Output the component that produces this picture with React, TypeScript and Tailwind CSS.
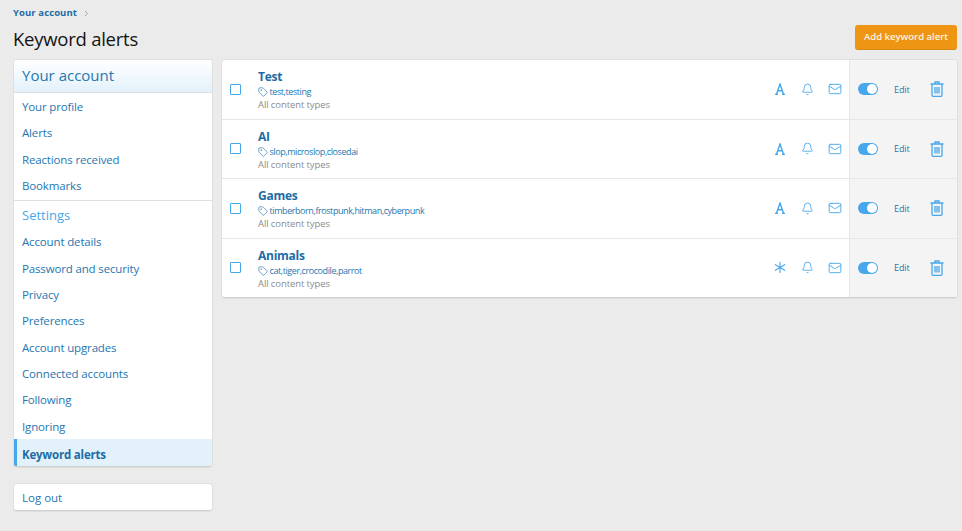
import React from 'react';
import { Tag, Bell, Mail, ChevronRight } from 'lucide-react';

const font = "font-['Open_Sans','Noto_Sans',sans-serif]";

const accountLinks = ['Your profile', 'Alerts', 'Reactions received', 'Bookmarks'];
const settingsLinks = [
  'Account details',
  'Password and security',
  'Privacy',
  'Preferences',
  'Account upgrades',
  'Connected accounts',
  'Following',
  'Ignoring',
];

const alerts = [
  { title: 'Test', tags: 'test,testing', star: false },
  { title: 'AI', tags: 'slop,microslop,closedai', star: false },
  { title: 'Games', tags: 'timberborn,frostpunk,hitman,cyberpunk', star: false },
  { title: 'Animals', tags: 'cat,tiger,crocodile,parrot', star: true },
];

function NavLink({ label }: { label: string }) {
  return (
    <a className="flex h-[26.4px] items-center pl-2 text-[11.5px] tracking-[-0.15px] text-[#2577b1]">{label}</a>
  );
}

function LetterIcon() {
  return (
    <svg width="12" height="12" viewBox="0 0 12 12" fill="none" stroke="#47a7eb" strokeWidth="1.4">
      <path d="M1 11.5h3M8 11.5h3M2.4 11.5 6 1l3.6 10.5M3.6 7.8h4.8" />
    </svg>
  );
}

function StarIcon() {
  return (
    <svg width="13" height="13" viewBox="0 0 13 13" fill="none" stroke="#47a7eb" strokeWidth="1.2">
      <path d="M6.5 0.5v12M1 3.2l11 6.6M12 3.2 1 9.8" />
    </svg>
  );
}

function TrashIcon() {
  return (
    <svg width="14" height="16" viewBox="0 0 14 16" fill="none" stroke="#47a7eb" strokeWidth="1.3">
      <path d="M0.5 3h13M5 3V1h4v2M2 3v11.2c0 .6.4 1.1 1 1.1h8c.6 0 1-.5 1-1.1V3M5 6v6.5M7 6v6.5M9 6v6.5" />
    </svg>
  );
}

function AlertRow({ title, tags, star, last }: { title: string; tags: string; star: boolean; last: boolean }) {
  return (
    <div className={`flex items-stretch ${last ? 'h-[58px]' : 'h-[59.5px] border-b border-[#e7e7e7]'}`}>
      <div className="flex w-[19px] items-center justify-end">
        <span className="h-[11px] w-[11px] rounded-[1px] border-[1.5px] border-[#47a7eb]" />
      </div>
      <div className="flex flex-1 flex-col pl-[17px] pt-[9px]">
        <div className="text-[12px] leading-[15px] font-bold tracking-[-0.25px] text-[#1d6ca5]">{title}</div>
        <div className="mt-[1px] flex h-[14px] items-center gap-[1.5px] text-[9px] tracking-[-0.42px] text-[#2577b1]">
          <Tag size={10} color="#2577b1" strokeWidth={1.6} />
          {tags}
        </div>
        <div className="-mt-[1px] text-[9.5px] leading-[13px] tracking-[-0.1px] text-[#8c8c8c]">All content types</div>
      </div>
      <div className="flex items-center">
        <span className="flex w-[12px] justify-center">{star ? <StarIcon /> : <LetterIcon />}</span>
        <span className="ml-[15px]">
          <Bell size={13} color="#47a7eb" strokeWidth={1.6} />
        </span>
        <span className="ml-[14px] mr-[7px]">
          <Mail size={14} color="#47a7eb" strokeWidth={1.6} />
        </span>
      </div>
      <div className="flex w-[108px] items-center border-l border-[#e7e7e7] bg-[#f4f4f4] pl-[8px]">
        <span className="flex h-[12px] w-[20px] items-center justify-end rounded-full bg-[#47a7eb] pr-[1px]">
          <span className="h-[10px] w-[10px] rounded-full bg-white" />
        </span>
        <span className="ml-[16px] text-[9px] tracking-[-0.1px] text-[#2577b1]">Edit</span>
        <span className="ml-[20px]">
          <TrashIcon />
        </span>
      </div>
    </div>
  );
}

export default function App() {
  return (
    <div className={`${font} h-[531px] w-[962px] overflow-hidden bg-[#ebebeb] px-[14px] pt-[7px] pr-[5px]`}>
      <div className="-ml-[1px] flex h-[12px] items-center text-[9.5px] font-bold tracking-[0.1px] text-[#1d6ca5]">
        Your account
        <ChevronRight size={9} color="#8c8c8c" className="ml-[5px]" />
      </div>
      <div className="mt-[6px] flex h-[28px] items-center justify-between">
        <h1 className="-ml-[1px] text-[18.5px] tracking-[-0.25px] text-[#141414]">Keyword alerts</h1>
        <button className="-mt-[3px] flex h-[25px] w-[102px] items-center justify-center rounded-[3px] border-b border-[#d78a10] bg-[#ee9614] text-[9.5px] font-semibold text-[#fdf3e0]">
          Add keyword alert
        </button>
      </div>
      <div className="mt-[7px] flex items-start gap-[10px]">
        <aside className="flex w-[198px] flex-col gap-[17px]">
          <div className="overflow-hidden rounded-[3px] border-b border-[#cfcfcf] bg-white shadow-[0_0_0_1px_#dfdfdf]">
            <div className="flex h-[33px] items-center border-b border-[#dfdfdf] bg-gradient-to-b from-[#ffffff] to-[#e3f1fb] pl-2 pb-[1px] text-[15px] text-[#2577b1]">
              Your account
            </div>
            <nav className="border-b border-[#dfdfdf] pt-[0.5px] pb-[0.5px]">
              {accountLinks.map((l) => (
                <NavLink key={l} label={l} />
              ))}
            </nav>
            <div className="flex h-[30px] items-center pl-2 text-[13px] text-[#47a7eb]">Settings</div>
            <nav className="-mt-[2px]">
              {settingsLinks.map((l) => (
                <NavLink key={l} label={l} />
              ))}
              <a className="-mt-[0.5px] flex h-[27px] items-center border-l-[3px] border-[#47a7eb] bg-[#e3f1fb] pl-[5px] pt-[3px] text-[11.5px] font-bold tracking-[-0.2px] text-[#1d6ca5]">
                Keyword alerts
              </a>
            </nav>
          </div>
          <div className="flex h-[27px] items-center rounded-[3px] border-b border-[#cfcfcf] bg-white pl-2 pt-[1px] text-[11.5px] text-[#2577b1] shadow-[0_0_0_1px_#dfdfdf]">
            Log out
          </div>
        </aside>
        <main className="flex-1 overflow-hidden rounded-[3px] border-b border-[#cfcfcf] bg-white shadow-[0_0_0_1px_#dfdfdf]">
          {alerts.map((a, i) => (
            <AlertRow key={a.title} title={a.title} tags={a.tags} star={a.star} last={i === alerts.length - 1} />
          ))}
        </main>
      </div>
    </div>
  );
}
